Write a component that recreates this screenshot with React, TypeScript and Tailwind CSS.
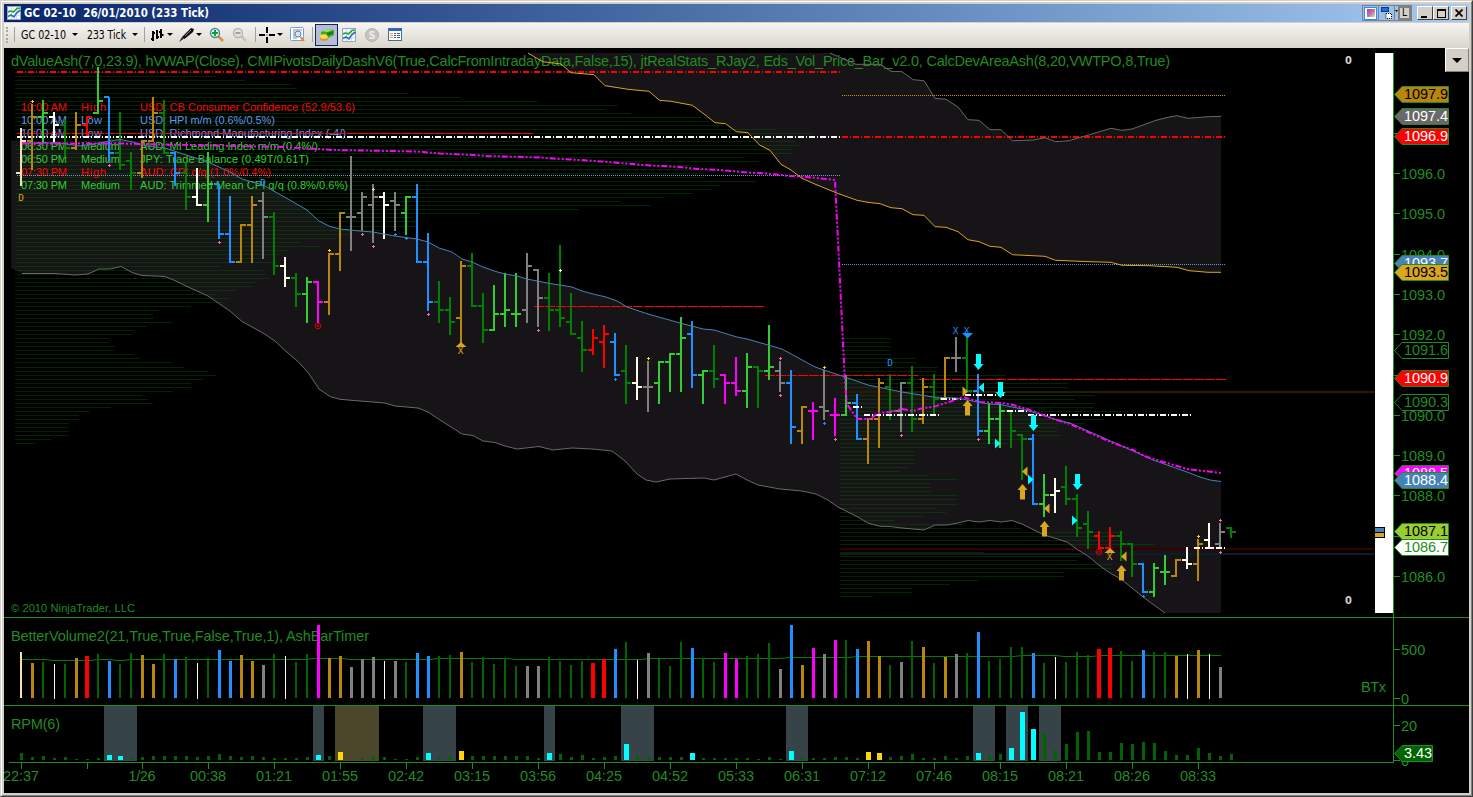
import type { ReactNode } from "react";

type BarColor = "a" | "d" | "l" | "g" | "w" | "r" | "b" | "m" | "s";

// color, high, low, open, close, top of the volume bar
type Bar = [BarColor, number, number, number, number, number];

const priceColor: Record<BarColor, string> = {
  a: "#f5deb3",
  d: "#b8860b",
  l: "#32cd32",
  g: "#008000",
  w: "#fffaf0",
  r: "#ff0000",
  b: "#1e90ff",
  m: "#ff00ff",
  s: "#808080",
};

const volumeColor: Record<BarColor, string> = {
  ...priceColor,
  l: "#006400",
  g: "#006400",
};

// offset from the bar center, width
const volumeShape: Record<BarColor, [number, number]> = {
  a: [-1, 2],
  d: [-1, 3],
  l: [-1, 2],
  g: [-1, 2],
  w: [0, 1],
  r: [-2, 4],
  b: [-1, 3],
  m: [-1, 3],
  s: [-1, 3],
};

const bars: Bar[] = [
  ["a", 128, 186, 173, 141, 652],
  ["d", 104, 170, 141, 117, 663],
  ["l", 100, 143, 117, 113, 662],
  ["w", 112, 142, 117, 125, 664],
  ["g", 120, 157, 125, 148, 664],
  ["d", 112, 150, 148, 125, 658],
  ["r", 116, 136, 125, 117, 656],
  ["l", 67, 114, 113, 101, 654],
  ["b", 97, 162, 97, 153, 661],
  ["g", 112, 170, 153, 165, 664],
  ["g", 152, 190, 161, 173, 653],
  ["d", 140, 178, 173, 141, 655],
  ["d", 97, 142, 141, 113, 664],
  ["g", 100, 154, 113, 153, 654],
  ["b", 152, 186, 153, 173, 659],
  ["g", 162, 210, 173, 197, 657],
  ["w", 168, 206, 197, 205, 663],
  ["l", 152, 222, 205, 184, 658],
  ["b", 184, 239, 184, 234, 650],
  ["b", 196, 263, 234, 262, 661],
  ["d", 224, 263, 262, 225, 655],
  ["d", 196, 263, 225, 205, 661],
  ["s", 192, 259, 201, 217, 665],
  ["g", 212, 275, 217, 266, 654],
  ["w", 257, 287, 266, 278, 656],
  ["g", 273, 307, 278, 294, 662],
  ["l", 277, 323, 294, 282, 654],
  ["m", 281, 323, 282, 302, 625],
  ["d", 253, 315, 302, 254, 658],
  ["d", 212, 271, 254, 213, 656],
  ["s", 156, 251, 217, 217, 667],
  ["s", 192, 231, 213, 197, 659],
  ["s", 184, 243, 205, 197, 657],
  ["w", 192, 239, 197, 205, 661],
  ["s", 192, 231, 201, 205, 661],
  ["l", 196, 235, 213, 197, 662],
  ["b", 184, 263, 197, 262, 653],
  ["b", 233, 311, 262, 302, 656],
  ["g", 281, 323, 302, 310, 656],
  ["g", 297, 335, 310, 322, 655],
  ["d", 261, 344, 318, 266, 652],
  ["g", 253, 307, 266, 306, 662],
  ["g", 293, 343, 306, 330, 657],
  ["l", 285, 331, 330, 314, 664],
  ["l", 273, 327, 314, 310, 658],
  ["l", 273, 327, 314, 314, 666],
  ["s", 253, 323, 310, 266, 666],
  ["s", 269, 327, 270, 298, 666],
  ["g", 273, 331, 298, 310, 657],
  ["g", 245, 327, 310, 318, 661],
  ["g", 293, 335, 322, 334, 665],
  ["g", 321, 372, 338, 350, 661],
  ["r", 329, 355, 350, 338, 663],
  ["r", 325, 368, 342, 334, 659],
  ["b", 333, 376, 342, 375, 649],
  ["g", 345, 404, 371, 383, 642],
  ["w", 357, 400, 383, 387, 660],
  ["s", 361, 412, 387, 387, 653],
  ["l", 361, 404, 383, 362, 659],
  ["l", 353, 392, 362, 354, 666],
  ["l", 317, 392, 354, 338, 642],
  ["b", 321, 388, 334, 375, 648],
  ["l", 370, 404, 375, 371, 658],
  ["g", 345, 388, 371, 379, 662],
  ["m", 374, 404, 375, 383, 653],
  ["m", 357, 396, 383, 391, 659],
  ["l", 353, 408, 391, 367, 656],
  ["g", 366, 408, 367, 371, 654],
  ["l", 325, 380, 371, 367, 643],
  ["s", 361, 392, 371, 383, 669],
  ["b", 370, 444, 383, 427, 625],
  ["d", 406, 444, 431, 407, 665],
  ["m", 402, 440, 411, 411, 648],
  ["s", 370, 420, 407, 411, 654],
  ["m", 398, 436, 415, 415, 640],
  ["l", 375, 416, 415, 403, 640],
  ["b", 394, 440, 403, 439, 649],
  ["d", 418, 464, 439, 419, 641],
  ["d", 378, 448, 419, 383, 656],
  ["g", 374, 420, 387, 411, 665],
  ["s", 382, 432, 411, 383, 662],
  ["g", 366, 432, 383, 419, 641],
  ["d", 378, 424, 419, 387, 647],
  ["g", 374, 415, 387, 399, 663],
  ["d", 357, 399, 399, 358, 657],
  ["s", 337, 372, 358, 358, 654],
  ["g", 337, 392, 358, 391, 653],
  ["b", 374, 436, 391, 431, 632],
  ["l", 403, 444, 431, 419, 661],
  ["l", 403, 448, 419, 411, 659],
  ["g", 410, 448, 411, 431, 647],
  ["g", 434, 480, 435, 439, 647],
  ["b", 434, 505, 439, 504, 653],
  ["l", 474, 517, 504, 495, 663],
  ["w", 478, 513, 495, 491, 657],
  ["g", 466, 505, 487, 499, 662],
  ["g", 494, 537, 499, 528, 652],
  ["g", 511, 549, 524, 532, 655],
  ["r", 531, 549, 536, 548, 649],
  ["r", 527, 549, 548, 536, 648],
  ["g", 531, 561, 536, 544, 651],
  ["g", 543, 577, 544, 564, 661],
  ["b", 563, 593, 564, 592, 650],
  ["l", 563, 597, 592, 568, 652],
  ["l", 555, 585, 572, 572, 652],
  ["d", 559, 577, 576, 560, 656],
  ["w", 547, 569, 560, 564, 654],
  ["d", 539, 581, 564, 544, 650],
  ["w", 523, 549, 540, 548, 654],
  ["s", 523, 549, 544, 532, 667],
  ["g", 527, 538, 528, 532, 698],
];

const rpm = [
  7, 3, 4, 2, 3, 1, 1, 2, 5, 4, 2, 3, 4, 4, 4, 4, 3, 4, 6, 4, 3, 4, 3, 2, 2, 2,
  3, 5, 4, 8, 0, 2, 4, 3, 1, 1, 3, 7, 3, 4, 9, 4, 4, 4, 4, 4, 4, 2, 7, 6, 3, 5,
  2, 3, 4, 16, 5, 4, 3, 3, 3, 7, 2, 2, 2, 2, 2, 1, 3, 1, 9, 3, 2, 2, 3, 3, 2, 8,
  7, 3, 4, 6, 2, 2, 4, 2, 4, 7, 5, 6, 12, 48, 31, 28, 10, 16, 28, 29, 8, 8, 17,
  16, 18, 17, 9, 5, 5, 12, 7, 4, 6,
];
const rpmCyan = [8, 9, 27, 37, 48, 55, 61, 70, 87, 90, 91, 92];
const rpmGold = [29, 40, 77, 78];

// x, width, color
const rpmBands: [number, number, string][] = [
  [104, 33, "#364348"],
  [313, 11, "#364348"],
  [335, 44, "#4b472b"],
  [423, 33, "#364348"],
  [544, 11, "#364348"],
  [621, 33, "#364348"],
  [786, 22, "#364348"],
  [973, 22, "#364348"],
  [1006, 22, "#364348"],
  [1039, 22, "#364348"],
];

// Right ends of the volume profile rows, top to bottom
const profileOne = [
  145, 200, 216, 245, 292, 297, 409, 460, 538, 618, 604, 631, 701, 710, 722, 776,
  814, 795, 795, 799, 791, 793, 745, 759, 693, 705, 705, 705, 756, 720, 712, 693,
  665, 620, 651, 579, 480, 413, 417, 417, 385, 350, 336, 301, 320, 288, 279, 261,
  277, 220, 263, 266, 269, 256, 253, 237, 217, 230, 223, 191, 159, 153, 154, 172,
  147, 135, 131, 109, 109, 114, 114, 133, 140, 172, 184, 208, 216, 203, 191, 191,
  172, 142, 148, 153, 111, 90, 79, 79, 69, 69, 69, 69, 51, 36,
];
const profileTwo = [
  891, 891, 891, 891, 891, 916, 916, 938, 938, 1006, 1006, 1068, 1068, 1068, 1095,
  1075, 1094, 1094, 1128, 1110, 1104, 1085, 1057, 1057, 1062, 1033, 1008, 986,
  915, 915, 915, 915, 908, 900, 929, 958, 931, 931, 931, 958, 958, 958, 936, 946,
  923, 895, 966, 1021, 1123, 1123, 1123, 1154, 1160, 984, 1082, 1077, 1112, 1112,
  1064, 1064, 979, 950, 912, 912, 873,
];

function rowY(k: number) {
  return (
    93 + 4 * k - (k < 0 ? 1 : 0) + (k >= 33 ? 1 : 0) + (k >= 68 ? 1 : 0) + (k >= 102 ? 1 : 0)
  );
}

const middleLine =
  "22,143 60,143 80,146 110,141 120,139.5 133,142 147,146 165,148 177,152 208,162 230,172 242,179 263,185 288,199 307,210 319,221 330,226.5 340,229 360,231 373,232 395,236 417,239 428,242 439,248 452,252 462,259 472,262 483,267 494,271 505,274 517,276 527,279 547,283 572,287 582,291 593,294 606,297 617,301 627,307 648,314 680,323 703,329 714,330 727,334 737,337 747,339 782,349 815,367 845,377 868,385 902,392 933,397 957,398 988,404 1000,404.5 1022,409 1043,415 1057,420 1070,423 1088,431 1122,446 1153,460 1187,472 1200,477 1210,480 1221,481.5";
const lowerLine =
  "22,273.5 55,273.5 75,275 88,274 99,269 110,269 121,266.5 132,272.5 142,275.5 165,276.5 176,281 187,286.5 208,296 230,311 242,321.5 263,333 275,341 285,350.5 298,361.5 308,372.5 319,389 330,396.5 340,399.3 360,401 385,403 395,406 418,408 428,412 440,420 451,427 462,434 473,435.5 483,441 495,442.5 505,446 517,449 539,446.5 553,450 572,448 592,449 612,451 625,461 637,474 646,480 656,482 670,479 704,478 714,480 736,474 747,480 758,485 780,489 802,491 816,494 828,500 838,507 848,512 858,517 868,523 880,526.3 890,526.5 902,528 913,529 924,530 935,525 947,525 958,523 968,520.5 979,522 990,520.5 1001,522 1012,520.5 1022,524 1043,534.5 1067,542 1078,550 1088,556 1100,566 1110,573 1121,579 1132,588 1143,597 1165,613";
const goldLine =
  "528,53 542.5,61.7 561,64 571,72.7 594,74.7 605,85.7 628,89.3 649,91.3 659.5,100.3 671,101.3 692.5,105.3 704,114 715,122.7 725.6,123.7 736.4,131.7 748,132.7 759.5,145 770,150.3 781,164.3 791,170 802,178.3 814,183.7 836,192.7 857,200.3 868,202.3 880,203.7 891,207.7 902,208.7 913,214.7 924,215.3 935,226.7 946,227.3 958,231.7 968,239.7 979,241.7 990,246.3 1001,247.3 1012.5,254.7 1045,256.3 1055.5,260.3 1090,261.7 1111,262.3 1122,265.3 1149,265.7 1177,267.3 1189,270.7 1208,272.3 1221,272.3";
const upperLine =
  "830,53 856,64.3 880,64.3 891,71.3 902,71.7 913,79.7 924,80.7 935,98.3 946,99.3 958,107 968,119.7 979,120.3 990,129.7 1001,129.7 1012.5,140.7 1033,140 1045,137.7 1055.5,141.7 1069,140.7 1111,128.3 1122,130.3 1132,129 1156,120.3 1168,117.3 1177,115.7 1188,118.3 1208,116.7 1221,116.3";
const vwapLine =
  "22,143.5 120,143.5 233,146 283,147 333,150 418,151.5 440,153.5 473,155 487,156 540,157.5 560,159 590,160.5 620,163 650,165.5 680,167 697,169 720,170 747,172.5 767,173.5 790,176 807,177 835,180 845,383 847,404 857,419 870,419 878,413 890,412 902,409 913,411 923,408 933,407 952,401 963,397 980,402 1002,403 1013,405 1027,409 1043,415 1057,420 1070,424 1088,432 1113,443 1133,450 1147,457 1167,463 1187,469 1221,473";
const volumeAverage =
  "21,659.5 45,659.5 52,660.5 90,660.5 98,659.5 110,659.5 116,660.5 124,660.5 130,659.5 305,659.5 315,658.5 342,658.5 350,659.5 430,659.5 438,658.5 508,658.5 516,659.5 640,659.5 650,658.5 780,658.5 790,657.5 848,657.5 858,656.5 1014,656.5 1022,655.5 1055,655.5 1064,656.5 1092,656.5 1100,655.5 1221,655.5";

const reverse = (points: string) => points.split(" ").reverse().join(" ");

// x1, x2, y, color, width, dash
const levels: [number, number, number, string, number, string][] = [
  [17, 840, 72, "#ff0000", 2, "6 2 1 2"],
  [17, 533, 133.5, "#ff0000", 1, "10 1"],
  [17, 840, 137, "#ffffff", 2, "6 2 1 2"],
  [842, 1225, 137, "#ff0000", 2, "6 2 1 2"],
  [17, 840, 175.5, "#6fa0cc", 1, "1 1"],
  [842, 1225, 264.5, "#5b9bd5", 1, "1 1"],
  [842, 1225, 95.5, "#c8922a", 1, "1 1"],
  [534, 764, 306.5, "#ff0000", 1, "10 1"],
  [765, 918, 375.5, "#ff0000", 1, "10 1"],
  [919, 1226, 379.5, "#ff0000", 1, "10 1"],
];

const stops: [number, number, number][] = [
  [853, 862, 407],
  [864, 939, 415],
  [941, 963, 399],
  [965, 1005, 395],
  [1007, 1028, 411],
  [1028, 1192, 415],
  [1194, 1225, 548],
];

const events = [
  ["10:00 AM", "High", "USD: CB Consumer Confidence (52.9/53.6)", "#ff0000", 215],
  ["10:00 AM", "Low", "USD: HPI m/m (0.6%/0.5%)", "#6495ed", 135],
  ["10:00 AM", "Low", "USD: Richmond Manufacturing Index (-4/)", "#6495ed", 206],
  ["06:30 PM", "Medium", "AUD: MI Leading Index m/m (0.4%/)", "#32cd32", 178],
  ["06:50 PM", "Medium", "JPY: Trade Balance (0.49T/0.61T)", "#32cd32", 169],
  ["07:30 PM", "High", "AUD: CPI q/q (1.0%/0.4%)", "#ff0000", 131],
  ["07:30 PM", "Medium", "AUD: Trimmed Mean CPI q/q (0.8%/0.6%)", "#32cd32", 208],
] as const;

const priceTicks: [string, number][] = [
  ["1096.0", 173],
  ["1095.0", 213],
  ["1094.0", 254],
  ["1093.0", 294],
  ["1092.0", 334],
  ["", 375],
  ["1090.0", 415],
  ["1089.0", 455],
  ["1088.0", 495],
  ["", 536],
  ["1086.0", 576],
  ["", 133],
  ["500", 649],
  ["0", 698],
  ["20", 725],
  ["0", 760],
];

// label, center y, fill, text color
const tags: [string, number, string, string][] = [
  ["1097.9", 94.5, "#b8860b", "#000000"],
  ["1097.4", 116.5, "#696969", "#ffffff"],
  ["1096.9", 136.5, "#ff0000", "#ffffff"],
  ["1093.7", 263.5, "#4682b4", "#ffffff"],
  ["1093.5", 272.5, "#daa520", "#000000"],
  ["1091.6", 350.5, "#000000", "#228b22"],
  ["1090.9", 378.5, "#ff0000", "#ffffff"],
  ["1090.3", 402.5, "#000000", "#228b22"],
  ["1088.5", 473.5, "#ff00ff", "#ffffff"],
  ["1088.4", 480.5, "#4682b4", "#ffffff"],
  ["1087.1", 531.5, "#9acd32", "#000000"],
  ["1086.7", 547.5, "#ffffff", "#228b22"],
  ["3.43", 753.5, "#006400", "#ffffff"],
];

const times: [string, number][] = [
  ["22:37", 21],
  ["", 87],
  ["1/26", 142],
  ["00:38", 208],
  ["01:21", 274],
  ["01:55", 340],
  ["02:42", 406],
  ["03:15", 472],
  ["03:56", 538],
  ["04:25", 604],
  ["04:52", 670],
  ["05:33", 736],
  ["06:31", 802],
  ["07:12", 868],
  ["07:46", 934],
  ["08:15", 1000],
  ["08:21", 1066],
  ["08:26", 1132],
  ["08:33", 1198],
];

const dots: [number, number, string][] = [
  [32, 101, "#ffd700"],
  [109, 165, "#ff69b4"],
  [219, 242, "#ff69b4"],
  [329, 250, "#ffd700"],
  [362, 234, "#ff69b4"],
  [373, 189, "#ffc0cb"],
  [373, 246, "#ff69b4"],
  [395, 234, "#1e90ff"],
  [406, 238, "#1e90ff"],
  [428, 314, "#ff69b4"],
  [538, 330, "#ff69b4"],
  [560, 270, "#ffffff"],
  [615, 379, "#1e90ff"],
  [648, 358, "#ffd700"],
  [780, 358, "#ff69b4"],
  [780, 395, "#ff69b4"],
  [824, 367, "#ffd700"],
  [824, 423, "#1e90ff"],
  [835, 439, "#ff69b4"],
  [901, 435, "#ff69b4"],
  [978, 439, "#ff69b4"],
  [1143, 596, "#1e90ff"],
  [1198, 536, "#ffd700"],
  [1220, 520, "#ff69b4"],
  [1220, 552, "#ff69b4"],
];

const letters: [string, number, number, string][] = [
  ["D", 21, 201, "#daa520"],
  ["D", 263, 186, "#1e90ff"],
  ["D", 890, 366, "#1e90ff"],
  ["X", 955.5, 334, "#1e90ff"],
  ["X", 966.5, 334, "#1e90ff"],
  ["X", 460.5, 354, "#daa520"],
  ["X", 1109.5, 560, "#daa520"],
];

const downArrows = [
  [978, 354],
  [1000, 382],
  [1033, 415],
  [1077, 474],
];
const upArrows = [
  [967, 400],
  [1022, 484],
  [1044, 521],
  [1121, 565],
];

const gold = "#daa520";
const cyan = "#00ffff";

function Chart() {
  return (
    <svg
      width="1465"
      height="745"
      viewBox="4 48 1465 745"
      className="block bg-black"
      fontFamily="'Liberation Sans', Arial, sans-serif"
    >
      {/* value area clouds */}
      <g fill="#161416">
        <polygon points={`11,140 ${middleLine} 1221,613 ${reverse(lowerLine)} 11,268`} />
        <polygon points={`${goldLine} ${reverse(upperLine)}`} />
      </g>

      {/* volume profile */}
      <g fill="#006400" fillOpacity="0.38">
        {profileOne.map((end, i) => (
          <rect key={i} x={15} y={rowY(i - 6)} width={end - 15} height={1} />
        ))}
        {profileTwo.map((end, i) => (
          <rect key={i} x={840} y={rowY(i + 61)} width={end - 840} height={1} />
        ))}
      </g>
      <g>
        <rect x={840} y={391} width={535} height={2} fill="#281c00" />
        <rect x={840} y={548} width={535} height={2} fill="#380000" />
        <rect x={840} y={553} width={535} height={2} fill="#0f1b26" />
      </g>

      <g fill="#228b22" fontSize="14.5">
        <text x="11" y="66" textLength="1159">
          dValueAsh(7,0,23.9), hVWAP(Close), CMIPivotsDailyDashV6(True,CalcFromIntradayData,False,15),
          jtRealStats_RJay2, Eds_Vol_Price_Bar_v2.0, CalcDevAreaAsh(8,20,VWTPO,8,True)
        </text>
        <text x="11" y="641" textLength="358">
          BetterVolume2(21,True,True,False,True,1), AshBarTimer
        </text>
        <text x="11" y="729" textLength="49">
          RPM(6)
        </text>
        <text x="1361" y="692" textLength="25">
          BTx
        </text>
        <text x="11" y="612" fontSize="11" textLength="124">
          © 2010 NinjaTrader, LLC
        </text>
      </g>

      <g fontSize="11">
        {events.map(([time, impact, title, color, length], i) => (
          <g key={i} fill={color}>
            <text x="21" y={111 + i * 13} textLength="46">
              {time}
            </text>
            <text x="81" y={111 + i * 13} textLength={impact === "Medium" ? 39 : impact === "High" ? 25 : 21}>
              {impact}
            </text>
            <text x="140" y={111 + i * 13} textLength={length}>
              {title}
            </text>
          </g>
        ))}
      </g>

      {levels.map(([x1, x2, y, color, width, dash]) => (
        <line
          key={`${x1}-${y}`}
          x1={x1}
          x2={x2}
          y1={y}
          y2={y}
          stroke={color}
          strokeWidth={width}
          strokeDasharray={dash}
        />
      ))}

      {/* price bars */}
      {bars.map(([color, high, low, open, close], i) => {
        const x = 21 + i * 11;
        return (
          <g key={i} fill={priceColor[color]}>
            <rect x={x - 1} y={high} width={2} height={low - high} />
            <rect x={x - 5} y={open - 1} width={5} height={2} />
            <rect x={x} y={close - 1} width={5} height={2} />
          </g>
        );
      })}

      {stops.map(([x1, x2, y]) => (
        <line
          key={x1}
          x1={x1}
          x2={x2}
          y1={y}
          y2={y}
          stroke="#ffffff"
          strokeWidth="2"
          strokeDasharray="6 2 1 2"
        />
      ))}

      {/* indicator lines */}
      <g fill="none">
        <polyline points={lowerLine} stroke="#696969" />
        <polyline points={upperLine} stroke="#696969" />
        <polyline points={middleLine} stroke="#4682b4" />
        <polyline points={goldLine} stroke="#daa520" />
        <polyline points={vwapLine} stroke="#ff00ff" strokeWidth="2" strokeDasharray="6 2 2 2 2 2" />
      </g>

      {/* signals */}
      {dots.map(([x, y, color]) => (
        <path key={`${x}-${y}`} d={`M${x - 1} ${y + 0.5}h3M${x + 0.5} ${y - 1}v3`} stroke={color} />
      ))}
      <g fontSize="9.5" textAnchor="middle" fontFamily="'DejaVu Sans Mono', monospace">
        {letters.map(([letter, x, y, color]) => (
          <text key={`${x}-${y}`} x={x} y={y} fill={color}>
            {letter}
          </text>
        ))}
      </g>
      {[
        [318, 326],
        [1099, 552],
      ].map(([x, y]) => (
        <g key={x} stroke="#e00000" fill="none">
          <circle cx={x} cy={y} r="2.8" />
          <circle cx={x} cy={y} r="0.8" />
        </g>
      ))}
      <g fill={cyan}>
        {downArrows.map(([x, y]) => (
          <path key={x} d={`M${x - 2} ${y}h5v10h2.5l-5 6l-5 -6h2.5z`} />
        ))}
        <path d="M978.5 387.5l5.5-5v10z" />
        <path d="M1000.5 443.5l-5.5-5v10z" />
        <path d="M1033.5 479.5l-5.5-5v10z" />
        <path d="M1077.5 520.5l-5.5-5v10z" />
      </g>
      <g fill={gold}>
        {upArrows.map(([x, y]) => (
          <path key={x} d={`M${x + 0.5} ${y}l5 6h-2.5v9.5h-5v-9.5h-2.5z`} />
        ))}
        <path d="M968 391.5l-5.5-5v10z" />
        <path d="M1022 471.5l5.5-5v10z" />
        <path d="M1044 508.5l5.5-5v10z" />
        <path d="M1121 556.5l5.5-5v10z" />
        <path d="M461 342l5.5 5h-11z" />
        <path d="M1110 548l5.5 5h-11z" />
      </g>
      <path d="M962 333h11l-5.5 5.5z" fill="#1e90ff" />

      <g fill="#d4d0c8" fontSize="11" fontWeight="bold" fontFamily="'DejaVu Sans Condensed', 'DejaVu Sans', sans-serif">
        <text x="1345" y="64">0</text>
        <text x="1345" y="604">0</text>
      </g>

      {/* volume panel */}
      <polyline points={volumeAverage} fill="none" stroke="#008000" />
      {bars.map(([color, , , , , top], i) => {
        const [offset, width] = volumeShape[color];
        return (
          <rect
            key={i}
            x={21 + i * 11 + offset}
            y={top}
            width={width}
            height={(color === "w" ? 699 : 698) - top}
            fill={volumeColor[color]}
          />
        );
      })}

      {/* rpm panel */}
      {rpmBands.map(([x, width, color]) => (
        <rect key={x} x={x} y={706} width={width} height={55} fill={color} />
      ))}
      {rpm.map((height, i) => {
        const isCyan = rpmCyan.includes(i);
        const isWide = isCyan || rpmGold.includes(i);
        return (
          <rect
            key={i}
            x={21 + i * 11 - (isWide ? 2 : 1)}
            y={760 - height}
            width={isWide ? 5 : 3}
            height={height}
            fill={isCyan ? cyan : isWide ? "#ffd700" : "#006400"}
          />
        );
      })}

      {/* axes */}
      <rect x="1375" y="53" width="18" height="560" fill="#ffffff" />
      <rect x="1375" y="527" width="10" height="11" fill="#000000" />
      <rect x="1375" y="528" width="9" height="4" fill="#4682b4" />
      <rect x="1375" y="533" width="9" height="4" fill="#daa520" />
      <g fill="#228b22">
        <rect x="1393" y="53" width="1" height="710" />
        <rect x="4" y="617" width="1465" height="1" />
        <rect x="4" y="705" width="1465" height="1" />
        <rect x="9" y="762" width="1385" height="1" />
      </g>
      <g fill="#228b22" fontSize="14.5">
        {priceTicks.map(([label, y]) => (
          <g key={y}>
            <rect x="1394" y={y} width="6" height="1" />
            <text x="1401" y={y + 6} textLength={label.length > 3 ? 44 : undefined}>
              {label}
            </text>
          </g>
        ))}
        {times.map(([label, x]) => (
          <g key={x} textAnchor="middle">
            <rect x={x} y="763" width="1" height="6" />
            <text x={x} y="781" textLength={label ? (label.length > 4 ? 36 : 27) : undefined}>
              {label}
            </text>
          </g>
        ))}
        {tags.map(([label, y, fill, color]) => {
          const right = label.length > 4 ? 1448.5 : 1432.5;
          return (
            <g key={label}>
              <path
                d={`M1394.5 ${y}L1402 ${y - 8}H${right}V${y + 8}H1402z`}
                fill={fill}
                stroke="#228b22"
              />
              <text x="1404" y={y + 4.5} fill={color} textLength={label.length > 4 ? 44 : 28}>
                {label}
              </text>
            </g>
          );
        })}
      </g>
    </svg>
  );
}

function Caret() {
  return <span className="h-0 w-0 border-x-[3px] border-t-[3px] border-x-transparent border-t-black" />;
}

function Divider() {
  return <span className="h-[15px] w-px bg-[#a5a297]" />;
}

function WaveIcon() {
  return (
    <svg width="14" height="14" viewBox="0 0 14 14">
      <rect x="0.5" y="0.5" width="13" height="13" fill="#f4f8fc" stroke="#8fa8c4" />
      <path d="M4.5 1v12M9.5 1v12M1 4.5h12M1 9.5h12" stroke="#cfdcea" />
      <path d="M1 10.5l3-1.5 3 2 2.5-4 4-3" stroke="#2f6fb5" strokeWidth="1.6" fill="none" />
      <path d="M1 6l2.500-1 3 1 3.500-3.500 3-0.500" stroke="#27a52d" strokeWidth="1.6" fill="none" />
    </svg>
  );
}

function ZoomIcon({ color, handle, plus }: { color: string; handle: string; plus?: boolean }) {
  return (
    <svg width="16" height="16" viewBox="0 0 16 16">
      <path d="M9 9l5 5" stroke={handle} strokeWidth="2.5" />
      <circle cx="6" cy="6" r="4.5" fill={plus ? "#e8f6f8" : "#e4e3df"} stroke={color} strokeWidth="1.3" />
      <path d={plus ? "M3 6h6M6 3v6" : "M3.5 6h5"} stroke={plus ? "#18a018" : "#a0a0a0"} strokeWidth="2" />
    </svg>
  );
}

function Slot({ width, children }: { width: string; children: ReactNode }) {
  return <div className={`flex shrink-0 items-center ${width}`}>{children}</div>;
}

function Toolbar() {
  return (
    <div className="flex h-[25px] items-center bg-linear-to-b from-[#f6f5f2] to-[#d9d6cc] pb-[2px] text-[11px] text-black">
      <Slot width="w-[10px]">
        <span className="ml-[2px] h-[16px] border-l-2 border-dotted border-[#aaa79c]" />
      </Slot>
      <Slot width="w-[7px]">
        <Divider />
      </Slot>
      <Slot width="w-[51px]">
        <svg width="48" height="16">
          <text x="0" y="12" fontSize="11.5" textLength="45" lengthAdjust="spacingAndGlyphs">GC 02-10</text>
        </svg>
      </Slot>
      <Slot width="w-[15px]">
        <Caret />
      </Slot>
      <Slot width="w-[45px]">
        <svg width="43" height="16">
          <text x="0" y="12" fontSize="11.5" textLength="39" lengthAdjust="spacingAndGlyphs">233 Tick</text>
        </svg>
      </Slot>
      <Slot width="w-[12px]">
        <Caret />
      </Slot>
      <Slot width="w-[6px]">
        <Divider />
      </Slot>
      <Slot width="w-[17px]">
        <svg width="14" height="14" viewBox="0 0 14 14">
          <path d="M3 3v10M1 11h2M3 5h2M7 2v9M7 9h2M11 1v9M9 4h2M11 7h2.5" stroke="#000" strokeWidth="2" />
        </svg>
      </Slot>
      <Slot width="w-[11px]">
        <Caret />
      </Slot>
      <Slot width="w-[18px]">
        <svg width="17" height="16" viewBox="0 0 17 16">
          <path d="M1 15l3-5 2 1.5z" fill="#222" />
          <path d="M4 10L13 1l3 1-1 3-8.5 7z" fill="#111" />
          <path d="M7 9l6-6" stroke="#888" />
        </svg>
      </Slot>
      <Slot width="w-[13px]">
        <Caret />
      </Slot>
      <Slot width="w-[23px]">
        <ZoomIcon color="#3b8aa8" handle="#e58a3c" plus />
      </Slot>
      <Slot width="w-[23px]">
        <ZoomIcon color="#b4b4b4" handle="#c4c4c4" />
      </Slot>
      <Slot width="w-[4px]">
        <Divider />
      </Slot>
      <Slot width="w-[18px]">
        <svg width="17" height="16" viewBox="0 0 17 16">
          <path d="M0 8h6M10 8h6M8 0v6M8 10v6" stroke="#000" strokeWidth="2" />
          <rect x="7.5" y="7.5" width="1" height="1" />
        </svg>
      </Slot>
      <Slot width="w-[13px]">
        <Caret />
      </Slot>
      <Slot width="w-[22px]">
        <svg width="15" height="15" viewBox="0 0 15 15">
          <rect x="0.5" y="0.5" width="13" height="13" rx="1" fill="#fff" stroke="#6fa0d8" />
          <path d="M3 3h9M3 5h2M3 7h2M3 9h2M3 11h4" stroke="#8a8a8a" />
          <circle cx="8" cy="7" r="3" fill="#cfe4f4" stroke="#4a86b8" />
          <path d="M10.5 10l3.5 4" stroke="#e58a3c" strokeWidth="2" />
        </svg>
      </Slot>
      <Slot width="w-[3px]">
        <Divider />
      </Slot>
      <Slot width="w-[27px]">
        <div className="flex h-[22px] w-[23px] items-center justify-center border border-[#0a246a] bg-[#b6bdd2]">
          <svg width="16" height="16" viewBox="0 0 16 16">
            <path d="M2 5l7-3 6 1v5l-6 3-7-1z" fill="#3cab22" />
            <path d="M3 4l6-2 5 1-6 2z" fill="#9be070" />
            <ellipse cx="5" cy="11.5" rx="4" ry="2.3" fill="#d39a1b" />
            <ellipse cx="5" cy="9.5" rx="4" ry="2.3" fill="#ffd84a" />
            <path d="M8 6l6-2v3l-6 2z" fill="#1d7c16" />
          </svg>
        </div>
      </Slot>
      <Slot width="w-[23px]">
        <WaveIcon />
      </Slot>
      <Slot width="w-[23px]">
        <svg width="14" height="14" viewBox="0 0 14 14">
          <circle cx="7" cy="7" r="6.5" fill="#c3c3c0" stroke="#b0b0ae" />
          <text x="7" y="11" textAnchor="middle" fontSize="11" fontWeight="bold" fill="#ececea">S</text>
        </svg>
      </Slot>
      <Slot width="w-[20px]">
        <svg width="14" height="13" viewBox="0 0 14 13">
          <rect x="0.5" y="0.5" width="13" height="12" fill="#fff" stroke="#3b6ea5" />
          <rect x="1" y="1" width="12" height="2" fill="#2d62c4" />
          <path d="M2 5.5h3M2 7.5h3M2 9.5h3" stroke="#e0a030" />
          <path d="M6 5.5h2M9 5.5h3M6 7.5h2M9 7.5h3M6 9.5h2M9 9.5h3" stroke="#4b5f86" />
        </svg>
      </Slot>
    </div>
  );
}

function TitleBar() {
  const button =
    "flex h-[14px] w-[16px] items-center justify-center border border-t-white border-r-[#404040] border-b-[#404040] border-l-white bg-[#d4d0c8]";

  return (
    <div className="flex h-[18px] items-center bg-linear-to-r from-[#0a246a] to-[#a6caf0] pr-[2px] pl-[3px]">
      <WaveIcon />
      <svg width="190" height="18" className="ml-[3px]">
        <text
          x="0"
          y="13"
          fill="#fff"
          fontSize="11.5"
          fontWeight="bold"
          textLength="185"
          lengthAdjust="spacingAndGlyphs"
          className="whitespace-pre"
        >
          {"GC 02-10  26/01/2010 (233 Tick)"}
        </text>
      </svg>

      <div className="ml-auto flex h-[16px] w-[50px] border border-[#808080]">
        <div className="flex w-[16px] items-center justify-center border-r border-[#808080]">
          <div className="flex h-[13px] w-[13px] items-center justify-center border border-[#1e90ff] bg-white">
            <span className="h-[8px] w-[8px] bg-linear-to-br from-[#c03080] via-[#b070c0] to-[#e8e060]" />
          </div>
        </div>
        <svg width="19" height="14" viewBox="0 0 19 14">
          <rect x="2.5" y="1.5" width="7" height="4" fill="#1e6fe0" stroke="#0a3a90" />
          <rect x="7" y="7.5" width="5.5" height="5" fill="#fff" stroke="#000" strokeDasharray="1 1" />
          <path d="M15.5 0v14" stroke="#808080" />
          <path d="M16 4h3l-1.5 2z" fill="#000" />
        </svg>
        <div className="flex w-[13px] items-center justify-center border-2 border-[#808080] bg-[#d4d0c8] text-[10px] leading-none">
          L
        </div>
      </div>
      <div className="ml-[5px] flex">
        <div className={button}>
          <span className="mt-[7px] mr-[2px] h-[2px] w-[6px] bg-black" />
        </div>
        <div className={button}>
          <span className="h-[9px] w-[9px] border border-t-2 border-black" />
        </div>
        <div className={`${button} ml-[2px]`}>
          <svg width="8" height="8" viewBox="0 0 8 8">
            <path d="M0.5 0.5l7 7M7.5 0.5l-7 7" stroke="#000" strokeWidth="1.7" />
          </svg>
        </div>
      </div>
    </div>
  );
}

export default function App() {
  return (
    <div className="flex h-[797px] w-[1473px] flex-col overflow-hidden border-t border-r border-b border-l border-t-[#d4d0c8] border-r-[#404040] border-b-[#404040] border-l-[#d4d0c8] bg-[#d4d0c8] font-['DejaVu_Sans_Condensed','DejaVu_Sans',sans-serif]">
      <div className="flex flex-1 flex-col border border-t-white border-r-[#808080] border-b-[#808080] border-l-white p-[2px]">
        <TitleBar />
        <div className="h-px bg-[#d4d0c8]" />
        <Toolbar />
        <div className="relative">
          <Chart />
          <div className="absolute top-0 right-0 flex h-[24px] w-[24px] items-center justify-center border border-t-white border-r-[#808080] border-b-[#808080] border-l-white bg-[#d4d0c8]">
            <span className="h-0 w-0 border-x-[5px] border-t-[5px] border-x-transparent border-t-black" />
          </div>
        </div>
      </div>
    </div>
  );
}
